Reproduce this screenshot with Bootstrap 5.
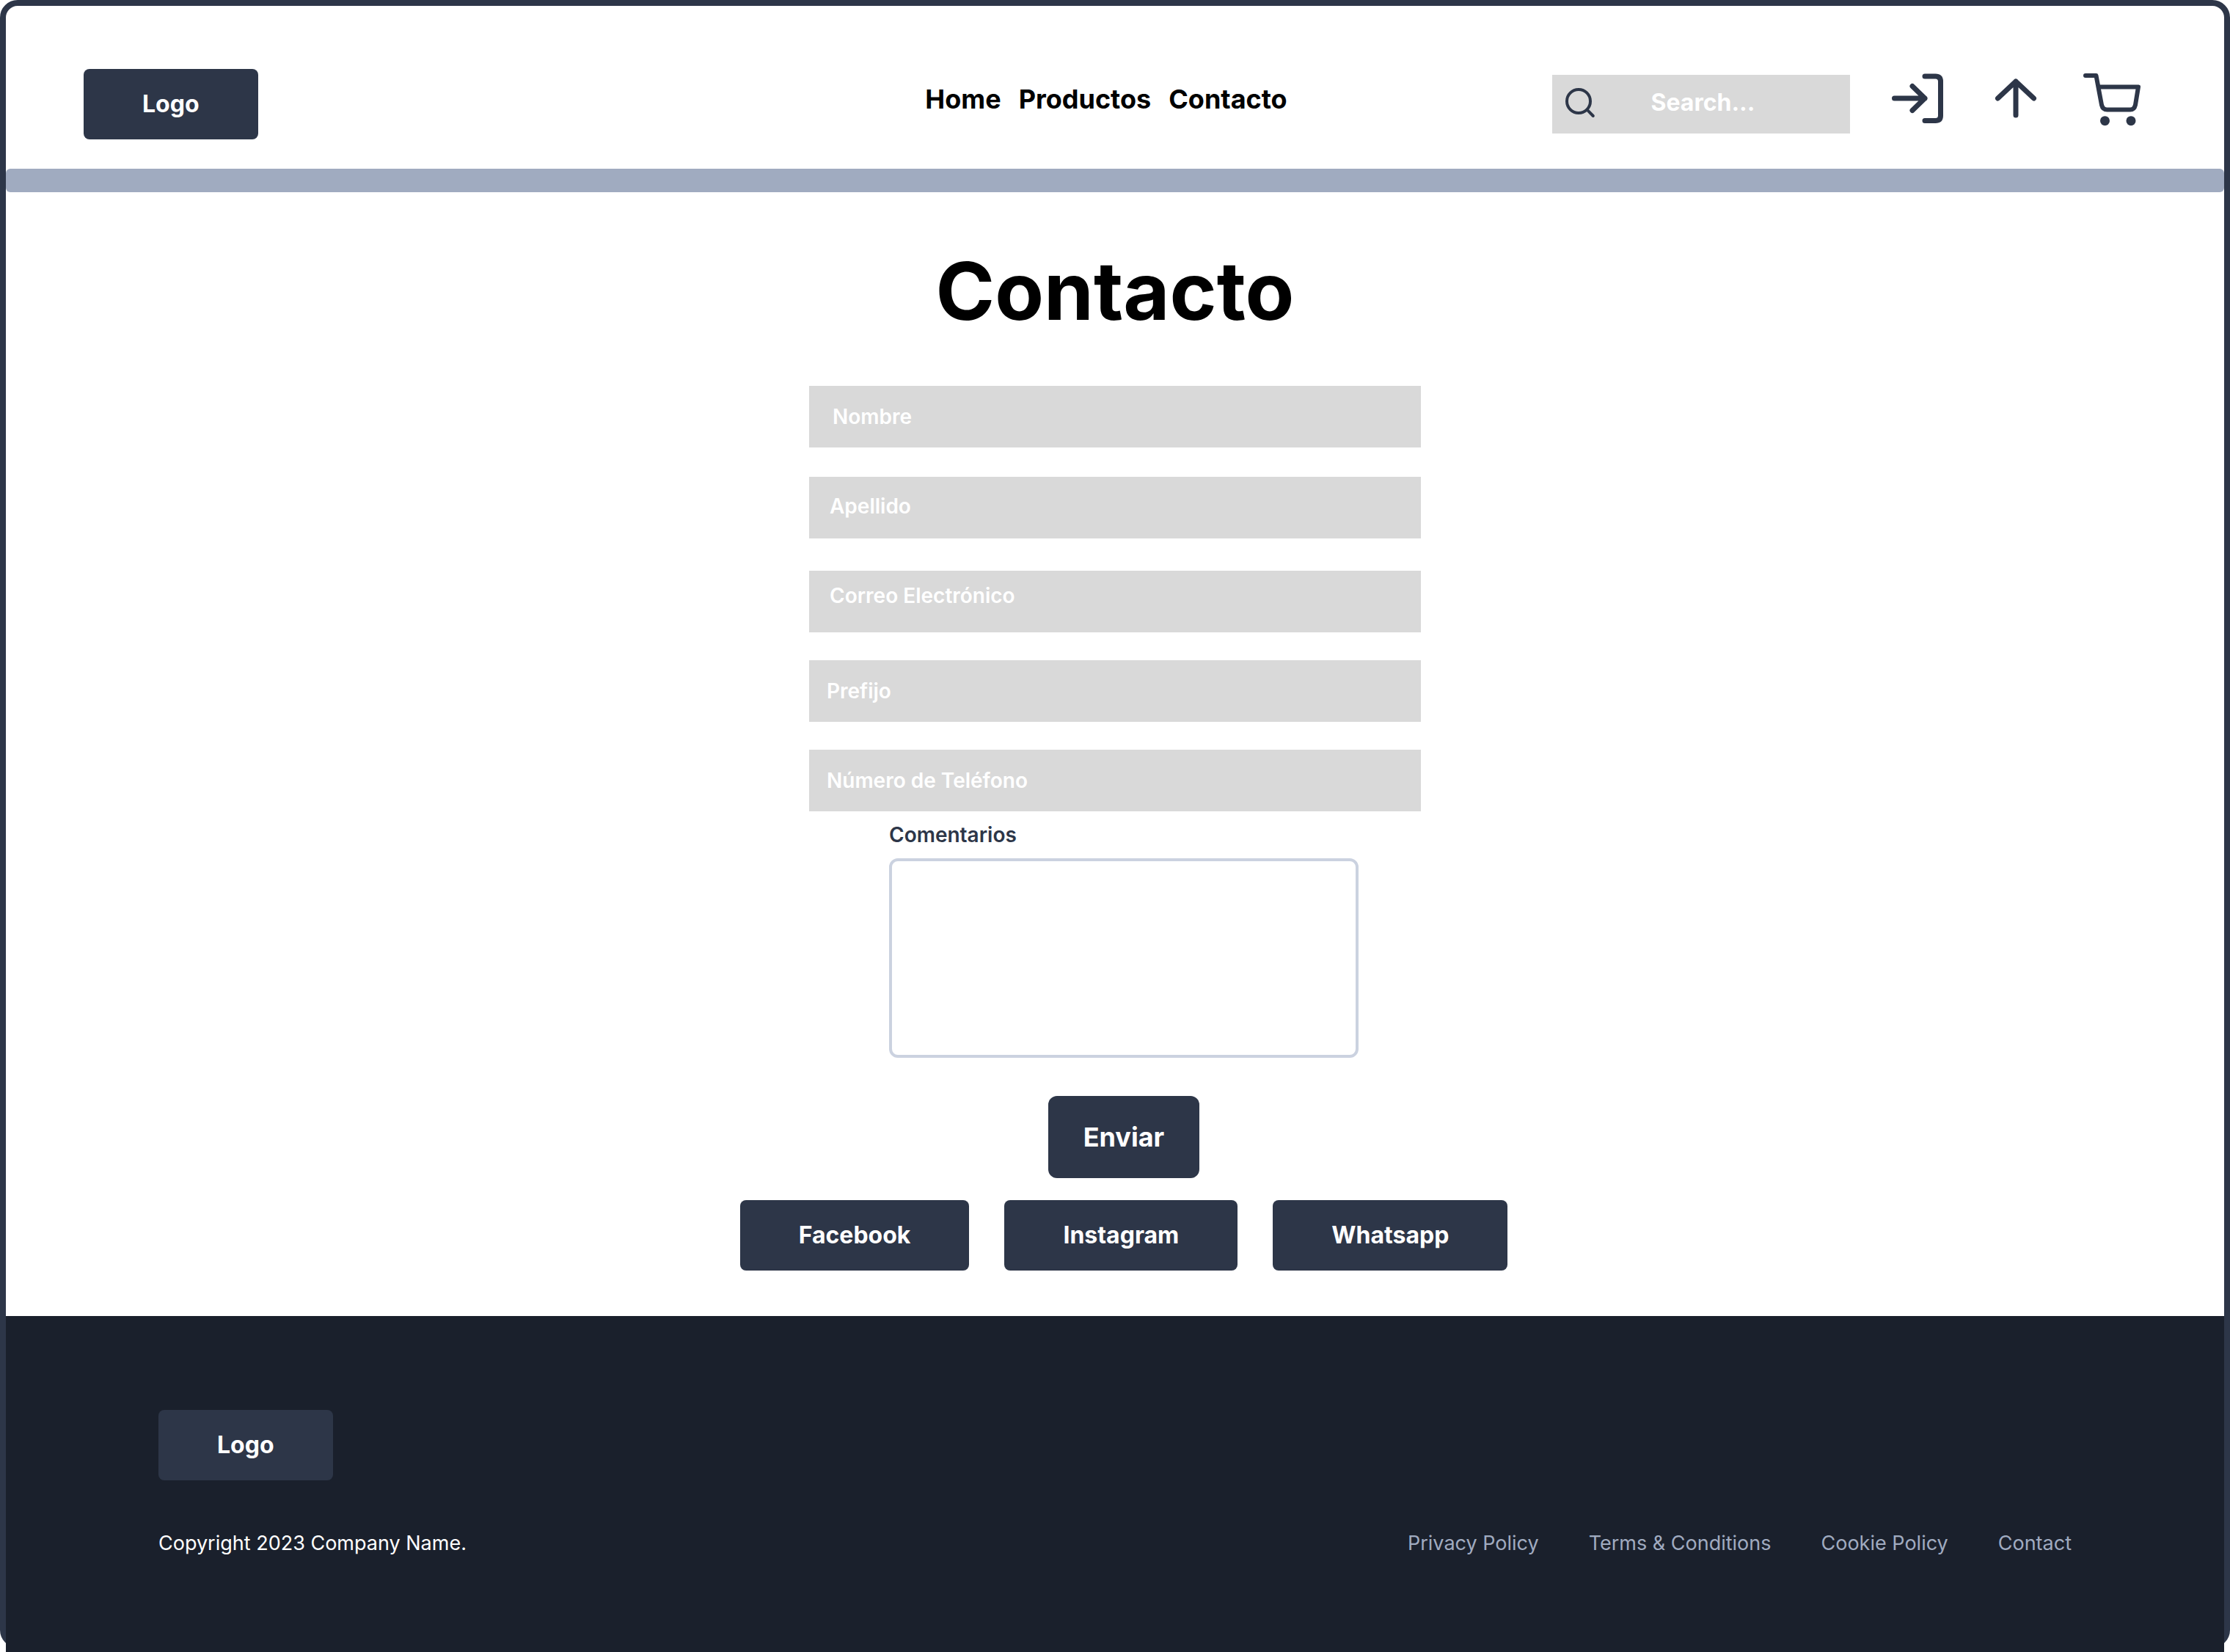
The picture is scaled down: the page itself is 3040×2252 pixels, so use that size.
<!DOCTYPE html>
<html lang="es">
<head>
<meta charset="utf-8">
<meta name="viewport" content="width=device-width, initial-scale=1">
<title>Contacto</title>
<link href="https://cdn.jsdelivr.net/npm/bootstrap@5.3.0/dist/css/bootstrap.min.css" rel="stylesheet">
<style>
  :root { --ink: #2d3648; --mist: #a0abc0; --line: #cbd2e0; --night: #1a202c; --fill: #d9d9d9; }
  body { font-family: Inter, "Liberation Sans", sans-serif; font-size: 28px; line-height: 40px; color: var(--ink); background: #fff; padding-bottom: 6px; }
  a { text-decoration: none; }

  .page-frame { border: 8px solid var(--ink); border-radius: 24px; }

  .btn-ink {
    --bs-btn-color: #fff; --bs-btn-bg: var(--ink);
    --bs-btn-hover-color: #fff; --bs-btn-hover-bg: #1f2737;
    --bs-btn-active-color: #fff; --bs-btn-active-bg: #1f2737;
    --bs-btn-border-width: 0; --bs-btn-border-radius: 8px;
    --bs-btn-font-size: 32px; --bs-btn-font-weight: 700; --bs-btn-line-height: 40px;
    --bs-btn-padding-x: 80px; --bs-btn-padding-y: 28px;
  }
  .btn-send { --bs-btn-font-size: 36px; --bs-btn-border-radius: 12px; --bs-btn-padding-x: 48px; --bs-btn-padding-y: 36px; }

  .site-header { display: grid; grid-template-columns: 1fr auto 1fr; padding: 86px 106px 40px; }
  .main-menu a { color: #000; font-size: 36px; font-weight: 700; line-height: 54px; padding: 14px 0; margin-right: 24px; }
  .search-box { width: 406px; height: 80px; margin-top: 8px; padding-left: 14px; background: var(--fill); }
  .search-box input, .field { border: 0; border-radius: 0; color: #fff; background: var(--fill); }
  .search-box input { font-size: 32px; font-weight: 700; line-height: 40px; padding: 0 32px 4px 0; text-align: center; }
  .search-box input:focus, .field:focus { color: #fff; background: var(--fill); }
  .search-box input::placeholder, .field::placeholder { color: #fff; opacity: 1; }
  .tool-links a { color: var(--ink); }
  .tool-links svg, .search-box svg { display: block; fill: none; stroke: currentColor; stroke-linecap: round; stroke-linejoin: round; }
  .accent-bar { height: 32px; border-radius: 6px; background: var(--mist); }

  .contact-area { padding: 66px 16px 62px; }
  .contact-area h1 { color: #000; font-size: 109px; font-weight: 700; line-height: 136px; margin-bottom: 62px; }
  .field-list { width: 834px; max-width: 100%; }
  .field { height: 84px; font-size: 28px; font-weight: 600; line-height: 40px; padding: 0 32px; margin-bottom: 38px; }
  .field-name { margin-bottom: 40px; }
  .field-surname { padding: 0 28px 4px; margin-bottom: 44px; }
  .field-mail { padding: 0 28px 16px; }
  .field-phone { padding: 0 24px; }
  .field-list .field:last-child { margin-bottom: 0; }
  .lower-area { padding-left: 24px; }
  .comment-area { width: 640px; max-width: 100%; margin-bottom: 52px; }
  .comment-area label { font-weight: 600; margin: 12px 0; }
  .comment-area textarea { height: 272px; border: 4px solid var(--line); border-radius: 12px; font-size: 28px; resize: none; }
  .social-row { gap: 48px; margin-top: 30px; }

  .site-footer { position: relative; background: var(--night); padding: 128px 208px; margin-bottom: -14px; }
  .legal-row { margin-top: 66px; color: #fff; font-size: 27px; }
  .legal-links { gap: 68px; }
  .legal-links a { color: var(--mist); }
</style>
</head>
<body>
<div class="page-frame">
  <header class="site-header align-items-start">
    <div><a class="btn btn-ink" href="#">Logo</a></div>
    <nav class="main-menu d-flex" aria-label="Principal">
      <a href="#">Home</a>
      <a href="#">Productos</a>
      <a href="#">Contacto</a>
    </nav>
    <div class="tool-links d-flex justify-content-end">
      <form class="search-box d-flex" role="search">
        <label for="search" class="flex-shrink-0 pt-3"><svg width="48" height="48" viewBox="0 0 24 24" stroke-width="2" role="img" aria-label="Buscar"><circle cx="11" cy="10" r="8"/><path d="M20.9 20 16.8 15.8"/></svg></label>
        <input id="search" class="form-control shadow-none" type="search" placeholder="Search...">
      </form>
      <a href="#" aria-label="Entrar"><svg width="156" height="80" viewBox="0 0 156 80" stroke-width="7"><path d="M102 10h14.500q7 0 7 7v46.500q0 7-7 7H102M60.500 40H102M85 23.500 102 40 85 56.500"/></svg></a>
      <a href="#" aria-label="Subir"><svg width="140" height="80" viewBox="0 0 140 80" stroke-width="7"><path d="M70 63V17M45.500 40 70 17l24.500 23"/></svg></a>
      <a href="#" aria-label="Carrito"><svg width="108" height="80" viewBox="0 0 108 80" stroke-width="6"><path d="M25 9H39.500L47 49Q48.500 55.500 54.500 55.500H86Q91.500 55.500 93 49L97 24.500H42.500"/><g fill="currentColor" stroke="none"><circle cx="51.500" cy="70.700" r="6.500"/><circle cx="87" cy="70.700" r="6.500"/></g></svg></a>
    </div>
  </header>
  <div class="accent-bar"></div>

  <main class="contact-area">
    <h1 class="text-center">Contacto</h1>
    <form>
      <div class="field-list mx-auto">
        <input class="form-control shadow-none field field-name" type="text" placeholder="Nombre" aria-label="Nombre">
        <input class="form-control shadow-none field field-surname" type="text" placeholder="Apellido" aria-label="Apellido">
        <input class="form-control shadow-none field field-mail" type="email" placeholder="Correo Electrónico" aria-label="Correo Electrónico">
        <input class="form-control shadow-none field field-phone" type="text" placeholder="Prefijo" aria-label="Prefijo">
        <input class="form-control shadow-none field field-phone" type="tel" placeholder="Número de Teléfono" aria-label="Número de Teléfono">
      </div>
      <div class="lower-area d-flex flex-column align-items-center">
        <div class="comment-area">
          <label class="d-block" for="comments">Comentarios</label>
          <textarea id="comments" class="form-control shadow-none"></textarea>
        </div>
        <button class="btn btn-ink btn-send" type="submit">Enviar</button>
      </div>
    </form>
    <div class="lower-area social-row d-flex flex-wrap justify-content-center">
      <a class="btn btn-ink" href="#">Facebook</a>
      <a class="btn btn-ink" href="#">Instagram</a>
      <a class="btn btn-ink" href="#">Whatsapp</a>
    </div>
  </main>

  <footer class="site-footer">
    <a class="btn btn-ink" href="#">Logo</a>
    <div class="legal-row d-flex flex-wrap justify-content-between">
      <span>Copyright 2023 Company Name.</span>
      <nav class="legal-links d-flex flex-wrap" aria-label="Legal">
        <a href="#">Privacy Policy</a>
        <a href="#">Terms &amp; Conditions</a>
        <a href="#">Cookie Policy</a>
        <a href="#">Contact</a>
      </nav>
    </div>
  </footer>
</div>
<script src="https://cdn.jsdelivr.net/npm/bootstrap@5.3.0/dist/js/bootstrap.bundle.min.js"></script>
</body>
</html>
